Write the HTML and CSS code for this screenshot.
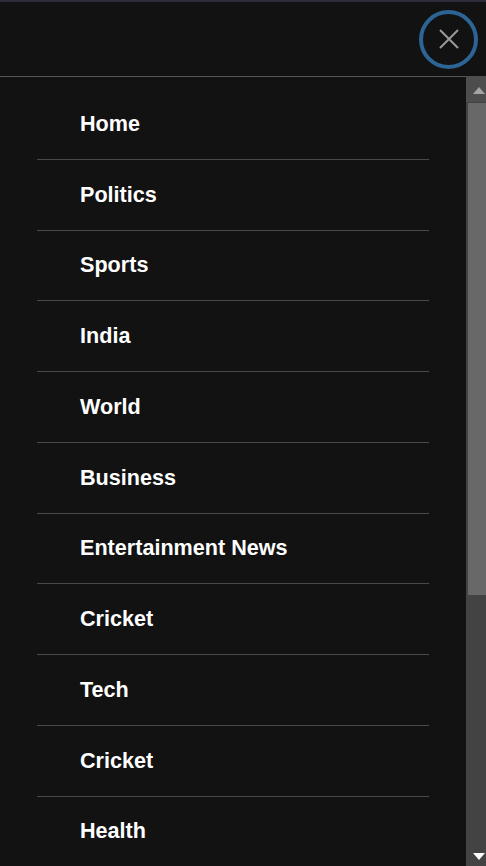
FILE: index.html
```html
<!DOCTYPE html>
<html lang="en">
<head>
<meta charset="utf-8">
<title>Menu</title>
<link rel="stylesheet" href="styles.css">
</head>
<body>
<div class="page">
  <div class="topline"></div>
  <header class="header">
    <button class="close" aria-label="Close">
      <svg width="20" height="20" viewBox="0 0 20 20"><path d="M1 1 L19 19 M19 1 L1 19" stroke="#9a9a9a" stroke-width="2" fill="none"/></svg>
    </button>
  </header>
  <div class="body-row">
    <nav class="menu">
      <ul class="list">
        <li class="item"><a href="#">Home</a></li>
        <li class="item"><a href="#">Politics</a></li>
        <li class="item"><a href="#">Sports</a></li>
        <li class="item"><a href="#">India</a></li>
        <li class="item"><a href="#">World</a></li>
        <li class="item"><a href="#">Business</a></li>
        <li class="item"><a href="#">Entertainment News</a></li>
        <li class="item"><a href="#">Cricket</a></li>
        <li class="item"><a href="#">Tech</a></li>
        <li class="item"><a href="#">Cricket</a></li>
        <li class="item"><a href="#">Health</a></li>
      </ul>
    </nav>
    <div class="scrollbar" aria-hidden="true">
      <div class="sb-btn sb-up">
        <svg width="12" height="7" viewBox="0 0 12 7"><polygon points="6,0 12,7 0,7" fill="#a3a3a3"/></svg>
      </div>
      <div class="sb-track">
        <div class="sb-thumb"></div>
      </div>
      <div class="sb-btn sb-down">
        <svg width="12" height="7" viewBox="0 0 12 7"><polygon points="0,0 12,0 6,7" fill="#ffffff"/></svg>
      </div>
    </div>
  </div>
</div>
</body>
</html>
```
FILE: styles.css
```css
html, body {
  margin: 0;
  padding: 0;
  background: #121212;
}
body {
  font-family: "Liberation Sans", Arial, sans-serif;
  color: #fff;
}
.page {
  height: 866px;
  display: flex;
  flex-direction: column;
  overflow: hidden;
}
.topline {
  height: 2px;
  background: #2c2c3c;
  flex: none;
}
.header {
  height: 74px;
  flex: none;
  display: flex;
  align-items: center;
  justify-content: flex-end;
  padding-right: 8px;
  box-sizing: border-box;
}
.close {
  width: 59px;
  height: 59px;
  border-radius: 50%;
  border: 4px solid #2c6496;
  background: transparent;
  display: flex;
  align-items: center;
  justify-content: center;
  padding: 0;
  cursor: pointer;
}
.close svg { display: block; }
.body-row {
  flex: 1;
  min-height: 0;
  display: flex;
}
.menu {
  flex: 1;
  min-width: 0;
  overflow: hidden;
  border-top: 1px solid #555;
  padding-top: 12px;
}
.list {
  list-style: none;
  margin: 0 0 0 37px;
  padding: 0;
  width: 392px;
}
.item {
  border-bottom: 1px solid #4a4a4a;
}
.item a {
  display: block;
  padding: 22.89px 0 22.89px 43px;
  line-height: 24px;
  font-size: 21.6px;
  font-weight: bold;
  color: #fff;
  text-decoration: none;
}
.scrollbar {
  width: 20px;
  flex: none;
  display: flex;
  flex-direction: column;
  background: #434343;
}
.sb-btn {
  height: 26px;
  flex: none;
  display: flex;
  justify-content: flex-end;
  padding-right: 1px;
}
.sb-btn svg { display: block; }
.sb-up {
  background: #4d4d4d;
  align-items: flex-start;
  padding-top: 11px;
  box-sizing: border-box;
}
.sb-down {
  align-items: flex-end;
  padding-bottom: 6px;
  box-sizing: border-box;
}
.sb-track {
  flex: 1;
  padding-top: 1px;
  padding-left: 2px;
}
.sb-thumb {
  height: 492px;
  background: #686868;
}
```
